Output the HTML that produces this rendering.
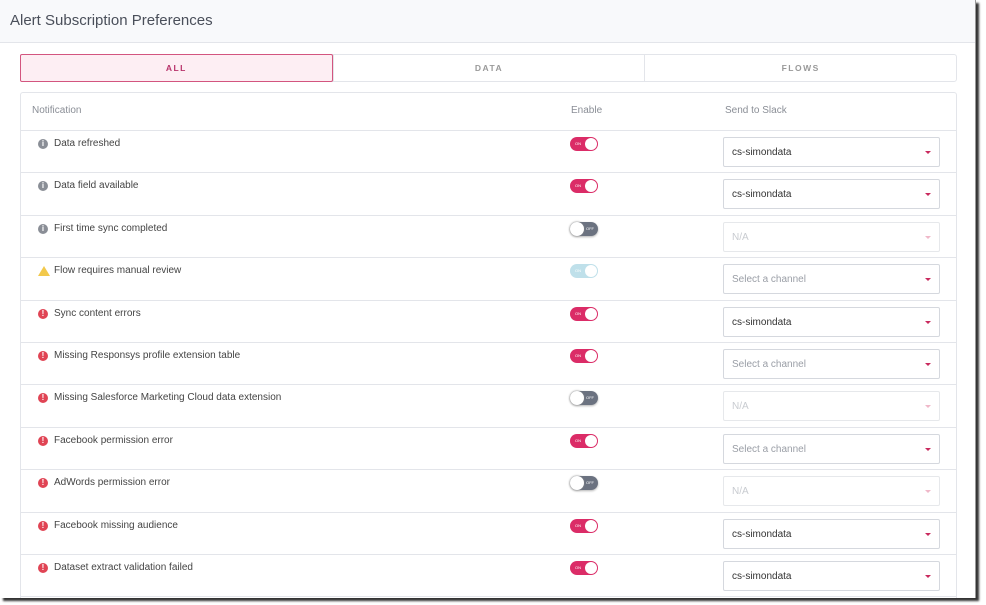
<!DOCTYPE html>
<html><head><style>
*{box-sizing:border-box;margin:0;padding:0}
body{width:986px;height:605px;background:#fff;font-family:"Liberation Sans",sans-serif;position:relative;overflow:hidden}
.page{position:absolute;left:0;top:0;width:976px;height:598px;background:#fff;box-shadow:3px 3px 2px #333;overflow:hidden;border-right:1px solid #999}
.hdr{height:43px;background:#f8f9fb;border-bottom:1px solid #e3e5ea;padding:12px 10px;font-size:15px;color:#4a4f5a}
.tabs{position:absolute;left:20px;top:54px;width:937px;height:28px;display:flex;border:1px solid #e3e5ea;border-radius:3px}
.tabs div{flex:1;text-align:center;font-size:8.5px;letter-spacing:1.5px;line-height:26px;color:#999;font-weight:bold;border-left:1px solid #e3e5ea}
.tabs div.a{background:#fdeef3;border:1px solid #d3557f;color:#b8326a;border-radius:2px;margin:-1px 0 -1px -1px}
.card{position:absolute;left:20px;top:92px;width:937px;height:520px;border:1px solid #e3e5ea;border-radius:3px}
.th{height:38px;border-bottom:1px solid #e3e5ea;position:relative;font-size:10px;color:#8a8e96}
.th span{position:absolute;top:12px}
.row{height:42.4px;border-bottom:1px solid #e3e5ea;position:relative;font-size:10px;color:#444}
.ic{position:absolute;left:17px;top:8px;width:10px;height:10px;border-radius:50%;color:#fff;font-size:8px;font-weight:bold;text-align:center;line-height:10px}
.i{background:#8a8e96}.e{background:#e04454}
.w{width:0;height:0;border-left:6px solid transparent;border-right:6px solid transparent;border-bottom:10px solid #f2c94c;border-radius:0;background:none}
.lbl{position:absolute;left:33px;top:7px}
.tg{position:absolute;left:549px;top:6px;width:28px;height:14px;border-radius:7px;font-size:4px;color:#fff;line-height:14px}
.tg:after{content:"";position:absolute;top:1px;width:12px;height:12px;border-radius:50%;background:#fff}
.on{background:#db2c67;padding-left:5px}.on:after{right:1px}
.off{background:#6b7280;padding-left:16px;box-shadow:0 1px 2px rgba(0,0,0,.3)}.off:after{left:0;top:0;width:14px;height:14px;box-shadow:0 0 2px #888}
.dis{background:#bfe0ea;padding-left:5px}.dis:after{right:1px}
.sel{position:absolute;left:702px;top:6px;width:217px;height:30px;border:1px solid #d5d8de;border-radius:2px;font-size:10px;color:#333;padding:9px 8px}
.sel:after{content:"";position:absolute;right:8px;top:13px;border-left:3px solid transparent;border-right:3px solid transparent;border-top:3px solid #c92a5e}
.sel.ph{color:#9a9ea6}.sel.na{color:#c8cbd0;border-color:#e6e8eb}.sel.na:after{border-top-color:#f0b8c9}
</style></head><body><div class="page">
<div class="hdr">Alert Subscription Preferences</div>
<div class="tabs"><div class="a">ALL</div><div>DATA</div><div>FLOWS</div></div>
<div class="card">
<div class="th"><span style="left:11px">Notification</span><span style="left:550px">Enable</span><span style="left:704px">Send to Slack</span></div>
<div class="row"><div class="ic i">i</div><div class="lbl">Data refreshed</div><div class="tg on">ON</div><div class="sel">cs-simondata</div></div>
<div class="row"><div class="ic i">i</div><div class="lbl">Data field available</div><div class="tg on">ON</div><div class="sel">cs-simondata</div></div>
<div class="row"><div class="ic i">i</div><div class="lbl">First time sync completed</div><div class="tg off">OFF</div><div class="sel na">N/A</div></div>
<div class="row"><div class="ic w"></div><div class="lbl">Flow requires manual review</div><div class="tg dis">ON</div><div class="sel ph">Select a channel</div></div>
<div class="row"><div class="ic e">!</div><div class="lbl">Sync content errors</div><div class="tg on">ON</div><div class="sel">cs-simondata</div></div>
<div class="row"><div class="ic e">!</div><div class="lbl">Missing Responsys profile extension table</div><div class="tg on">ON</div><div class="sel ph">Select a channel</div></div>
<div class="row"><div class="ic e">!</div><div class="lbl">Missing Salesforce Marketing Cloud data extension</div><div class="tg off">OFF</div><div class="sel na">N/A</div></div>
<div class="row"><div class="ic e">!</div><div class="lbl">Facebook permission error</div><div class="tg on">ON</div><div class="sel ph">Select a channel</div></div>
<div class="row"><div class="ic e">!</div><div class="lbl">AdWords permission error</div><div class="tg off">OFF</div><div class="sel na">N/A</div></div>
<div class="row"><div class="ic e">!</div><div class="lbl">Facebook missing audience</div><div class="tg on">ON</div><div class="sel">cs-simondata</div></div>
<div class="row"><div class="ic e">!</div><div class="lbl">Dataset extract validation failed</div><div class="tg on">ON</div><div class="sel">cs-simondata</div></div>
</div>
</div></body></html>
